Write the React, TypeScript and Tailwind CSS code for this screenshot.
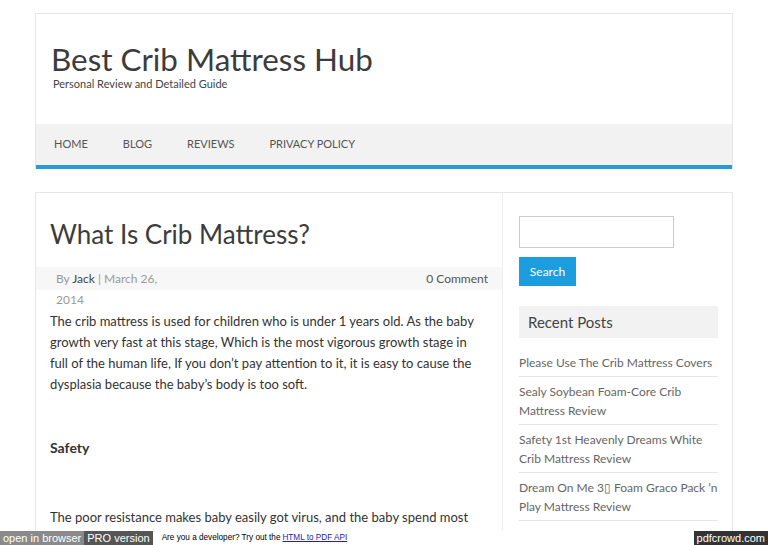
export default function App() {
  const nav = ["HOME", "BLOG", "REVIEWS", "PRIVACY POLICY"];
  const posts = [
    "Please Use The Crib Mattress Covers",
    "Sealy Soybean Foam-Core Crib Mattress Review",
    "Safety 1st Heavenly Dreams White Crib Mattress Review",
    "Dream On Me 3\u25AF Foam Graco Pack \u2019n Play Mattress Review",
  ];

  return (
    <div
      className="flex h-[545px] w-[768px] flex-col overflow-hidden bg-white text-[#333]"
      style={{ fontFamily: "Lato, 'Open Sans', sans-serif" }}
    >
      <div className="min-h-0 flex-1 overflow-hidden px-[35px] pt-[13px]">
        {/* header */}
        <div className="border border-b-0 border-[#e6e6e6]">
          <div className="h-[110px] pl-[15px] pt-[27px]">
            <h1 className="text-[31.4px] leading-[36px] text-[#3c3c3c]">Best Crib Mattress Hub</h1>
            <p className="pl-[2px] text-[11px] leading-[13px] text-[#444]">Personal Review and Detailed Guide</p>
          </div>
          <div className="flex h-[41px] items-center gap-[35px] bg-[#f2f2f2] pl-[18px] text-[11px] text-[#555]">
            {nav.map((n) => (
              <span key={n}>{n}</span>
            ))}
          </div>
          <div className="h-[4px] bg-[#2a9ad6]" />
        </div>

        {/* content */}
        <div className="mt-[23px] flex h-[340px] border border-b-0 border-[#e6e6e6]">
          <div className="w-[467px] border-r border-[#eee]">
            <h2 className="pl-[14px] pt-[25px] text-[26px] leading-[32px] text-[#3c3c3c]">What Is Crib Mattress?</h2>
            <div className="mt-[17px] flex h-[23px] items-center justify-between bg-[#f7f7f7] pl-[20px] pr-[14px] text-[12px] text-[#999]">
              <span>
                By <span className="text-[#444]">Jack</span> | March 26,
              </span>
              <span className="text-[#555]">0 Comment</span>
            </div>
            <div className="pl-[20px] text-[12px] leading-[20px] text-[#999]">2014</div>
            <p className="pl-[14px] pr-[20px] pt-[1px] text-[13px] leading-[21px] text-[#333]">
              The crib mattress is used for children who is under 1 years old. As the baby growth very fast at this
              stage, Which is the most vigorous growth stage in full of the human life, If you don’t pay attention to
              it, it is easy to cause the dysplasia because the baby’s body is too soft.
            </p>
            <h3 className="mt-[43px] pl-[14px] text-[14px] font-bold leading-[20px] text-[#333]">Safety</h3>
            <p className="mt-[49px] pl-[14px] pr-[20px] text-[13px] leading-[21px] text-[#333]">
              The poor resistance makes baby easily got virus, and the baby spend most
            </p>
          </div>

          {/* sidebar */}
          <div className="flex-1 pl-[16px] pr-[14px] pt-[23px]">
            <div className="h-[32px] w-[155px] border border-[#ccc] bg-white" />
            <div className="mt-[9px] flex h-[29px] w-[57px] items-center justify-center bg-[#1c9ede] text-[12px] text-white">
              Search
            </div>
            <div className="mt-[20px] flex h-[32px] items-center bg-[#f2f2f2] pl-[9px] text-[15px] text-[#444]">
              Recent Posts
            </div>
            <ul className="mt-[10px] text-[12px] leading-[19px] text-[#666]">
              {posts.map((p) => (
                <li key={p} className="border-b border-[#e6e6e6] pb-[4px] pt-[5px]">
                  {p}
                </li>
              ))}
            </ul>
          </div>
        </div>
      </div>

      {/* pdfcrowd bar */}
      <div
        className="flex h-[14px] w-full shrink-0 items-center bg-white text-[11px] leading-[14px]"
        style={{ fontFamily: "'Liberation Sans', Arial, sans-serif" }}
      >
        <span className="h-full bg-[#8a8a8a] px-[3px] text-white">open in browser</span>
        <span className="h-full bg-[#555] px-[3px] text-white">PRO version</span>
        <span className="ml-[9px] flex gap-[2px] text-[8.2px] text-black">
          <span>Are you a developer? Try out the</span>
          <span className="text-[#2020c0] underline">HTML to PDF API</span>
        </span>
        <span className="ml-auto h-full bg-[#333] px-[3px] text-white">pdfcrowd.com</span>
      </div>
    </div>
  );
}
